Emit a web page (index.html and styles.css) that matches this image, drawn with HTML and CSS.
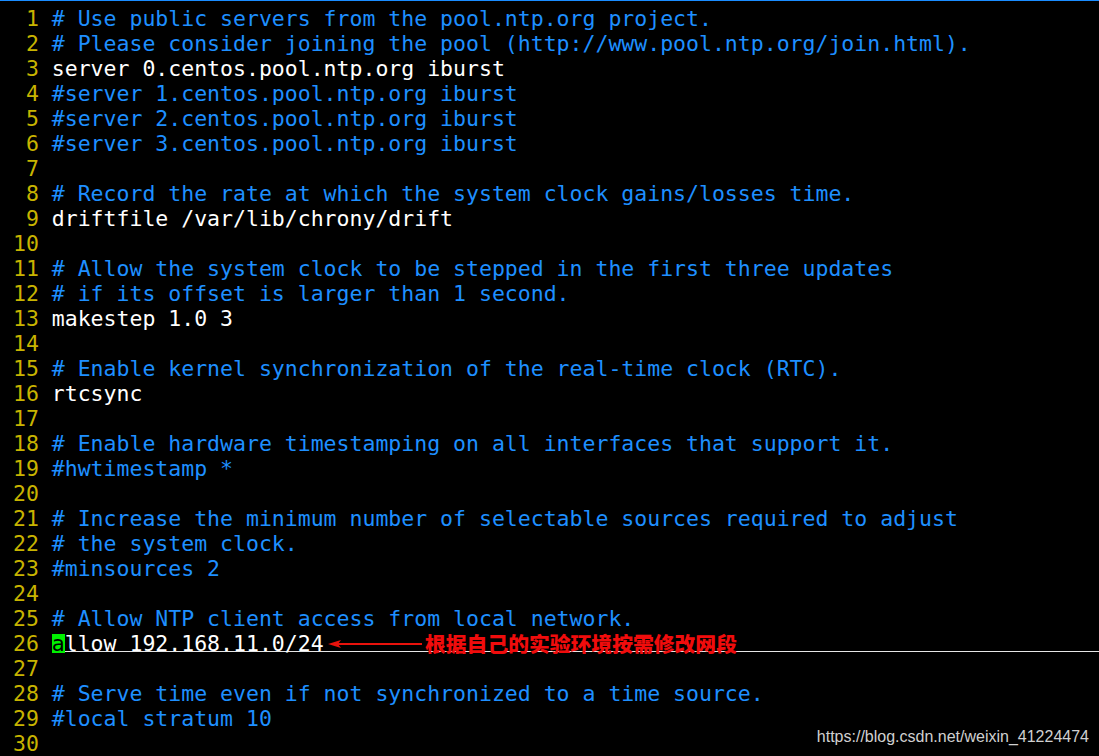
FILE: index.html
```html
<!DOCTYPE html>
<html>
<head>
<meta charset="utf-8">
<link rel="stylesheet" href="styles.css">
</head>
<body>
<div class="term">
  <div class="ln"><span class="nu">  1 </span><span class="cm"># Use public servers from the pool.ntp.org project.</span></div>
  <div class="ln"><span class="nu">  2 </span><span class="cm"># Please consider joining the pool (http://www.pool.ntp.org/join.html).</span></div>
  <div class="ln"><span class="nu">  3 </span><span class="tx">server 0.centos.pool.ntp.org iburst</span></div>
  <div class="ln"><span class="nu">  4 </span><span class="cm">#server 1.centos.pool.ntp.org iburst</span></div>
  <div class="ln"><span class="nu">  5 </span><span class="cm">#server 2.centos.pool.ntp.org iburst</span></div>
  <div class="ln"><span class="nu">  6 </span><span class="cm">#server 3.centos.pool.ntp.org iburst</span></div>
  <div class="ln"><span class="nu">  7 </span></div>
  <div class="ln"><span class="nu">  8 </span><span class="cm"># Record the rate at which the system clock gains/losses time.</span></div>
  <div class="ln"><span class="nu">  9 </span><span class="tx">driftfile /var/lib/chrony/drift</span></div>
  <div class="ln"><span class="nu"> 10 </span></div>
  <div class="ln"><span class="nu"> 11 </span><span class="cm"># Allow the system clock to be stepped in the first three updates</span></div>
  <div class="ln"><span class="nu"> 12 </span><span class="cm"># if its offset is larger than 1 second.</span></div>
  <div class="ln"><span class="nu"> 13 </span><span class="tx">makestep 1.0 3</span></div>
  <div class="ln"><span class="nu"> 14 </span></div>
  <div class="ln"><span class="nu"> 15 </span><span class="cm"># Enable kernel synchronization of the real-time clock (RTC).</span></div>
  <div class="ln"><span class="nu"> 16 </span><span class="tx">rtcsync</span></div>
  <div class="ln"><span class="nu"> 17 </span></div>
  <div class="ln"><span class="nu"> 18 </span><span class="cm"># Enable hardware timestamping on all interfaces that support it.</span></div>
  <div class="ln"><span class="nu"> 19 </span><span class="cm">#hwtimestamp *</span></div>
  <div class="ln"><span class="nu"> 20 </span></div>
  <div class="ln"><span class="nu"> 21 </span><span class="cm"># Increase the minimum number of selectable sources required to adjust</span></div>
  <div class="ln"><span class="nu"> 22 </span><span class="cm"># the system clock.</span></div>
  <div class="ln"><span class="nu"> 23 </span><span class="cm">#minsources 2</span></div>
  <div class="ln"><span class="nu"> 24 </span></div>
  <div class="ln"><span class="nu"> 25 </span><span class="cm"># Allow NTP client access from local network.</span></div>
  <div class="ln current"><span class="nu"> 26 </span><span class="tx cursorline"><span class="cursor">a</span>llow 192.168.11.0/24</span>
    <div class="note">
      <svg class="arrow" width="96" height="12" viewBox="0 0 96 12"><path d="M10 6 H94" stroke="#e8120c" stroke-width="2"/><path d="M0 6 L13 2 L10 6 L13 10 Z" fill="#e8120c"/></svg>
      <span class="note-text">根据自己的实验环境按需修改网段</span>
    </div>
  </div>
  <div class="ln"><span class="nu"> 27 </span></div>
  <div class="ln"><span class="nu"> 28 </span><span class="cm"># Serve time even if not synchronized to a time source.</span></div>
  <div class="ln"><span class="nu"> 29 </span><span class="cm">#local stratum 10</span></div>
  <div class="ln"><span class="nu"> 30 </span></div>
  <div class="watermark">https://blog.csdn.net/weixin_41224474</div>
</div>
</body>
</html>
```

FILE: styles.css
```css
html, body {
  margin: 0;
  padding: 0;
  background: #000;
}
.term {
  position: relative;
  width: 1099px;
  height: 756px;
  box-sizing: border-box;
  border-top: 1px solid #1a8cff;
  padding-top: 5px;
  background: #000;
  overflow: hidden;
  font-family: "DejaVu Sans Mono", monospace;
  font-size: 21.5px;
  line-height: 25px;
  color: #ffffff;
}
.ln {
  display: flex;
  height: 25px;
  position: relative;
}
.nu, .cm, .tx {
  white-space: pre;
}
.nu {
  color: #c8b400;
}
.cm {
  color: #1e8fff;
}
.tx {
  color: #ffffff;
}
.cursorline {
  flex: 1;
  background: linear-gradient(#e6e6e6, #e6e6e6) left bottom 4px / 100% 1px no-repeat;
}
.cursor {
  color: #000;
  background: linear-gradient(#00f000, #00f000) 0 3px / 100% 19px no-repeat;
}
.note {
  position: absolute;
  left: 328px;
  top: -2px;
  display: flex;
  align-items: center;
  gap: 1px;
}
.arrow {
  display: block;
  margin-top: 2px;
}
.note-text {
  font-family: "Noto Sans CJK SC", sans-serif;
  font-weight: 900;
  font-size: 20.8px;
  line-height: 28px;
  color: #f00c0c;
  white-space: nowrap;
}
.watermark {
  position: absolute;
  right: 10px;
  bottom: 9px;
  font-family: "Liberation Sans", Arial, sans-serif;
  font-size: 16px;
  line-height: 20px;
  color: #d0d0d0;
}
```
